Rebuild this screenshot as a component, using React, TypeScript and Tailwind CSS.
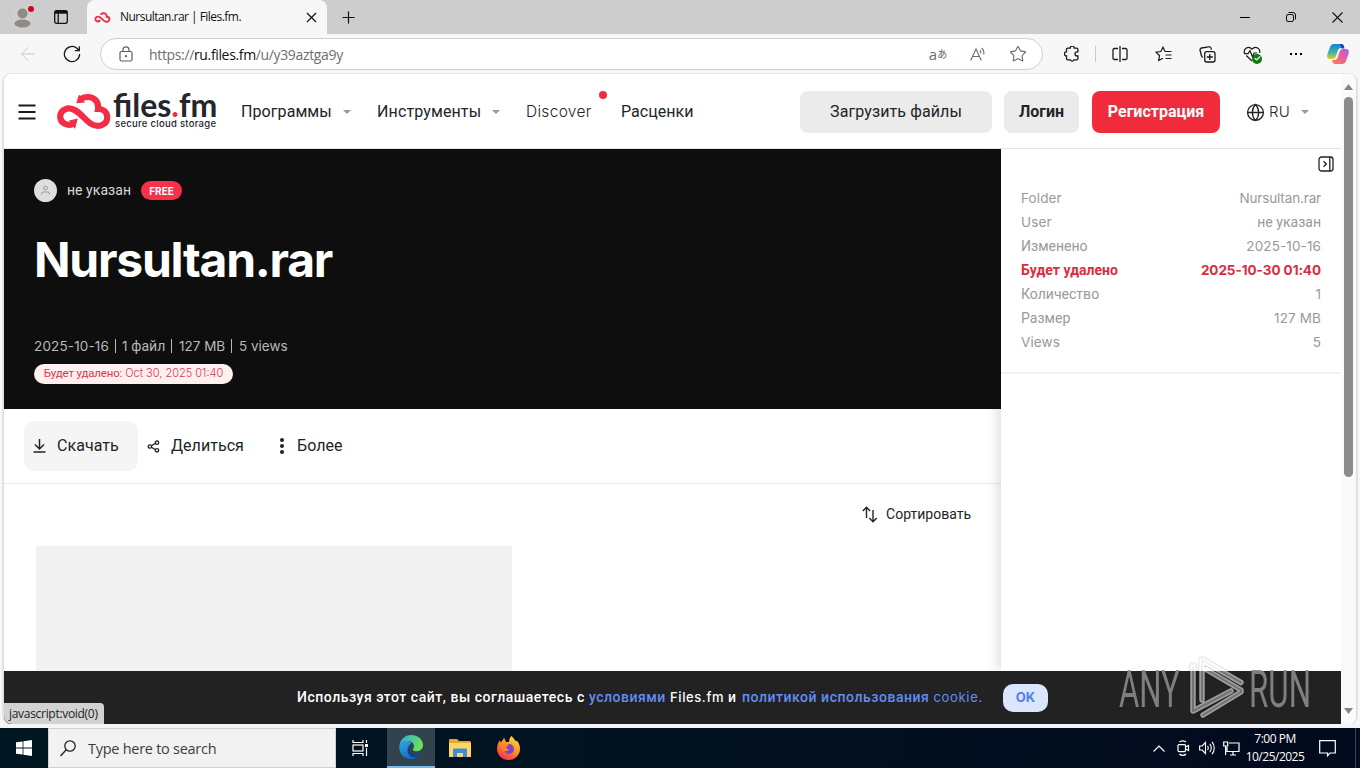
import type { ReactNode } from "react";
import { ArrowLeft, Check, Globe, Plus, Star } from "lucide-react";

const details = [
  { label: "Folder", value: "Nursultan.rar", lf: "latin", vf: "name" },
  { label: "User", value: "не указан", lf: "latin", vf: "cyr" },
  { label: "Изменено", value: "2025-10-16", lf: "cyr", vf: "latin" },
  { label: "Будет удалено", value: "2025-10-30 01:40", lf: "cyr", vf: "bold", alert: true },
  { label: "Количество", value: "1", lf: "cyr", vf: "latin" },
  { label: "Размер", value: "127 MB", lf: "cyr", vf: "latin" },
  { label: "Views", value: "5", lf: "latin", vf: "latin" },
];

const fonts: Record<string, string> = {
  latin: "font-['Inter',sans-serif] text-[13.5px] tracking-[0.12px]",
  name: "font-['Inter',sans-serif] text-[13.5px] tracking-[-0.15px]",
  bold: "font-['Inter',sans-serif] text-[13.5px] tracking-[-0.05px]",
  cyr: "font-['Roboto',sans-serif] text-[14px] tracking-[0.02px]",
};

function Cell({ className, children }: { className: string; children?: ReactNode }) {
  return <div className={`flex shrink-0 items-center justify-center ${className}`}>{children}</div>;
}

function Caret() {
  return (
    <svg width="8" height="4" viewBox="0 0 8 4">
      <path d="M0 0h8L4 4z" fill="#999" />
    </svg>
  );
}

// looped arrow cloud, shared by the favicon and the site logo
function CloudMark({ className }: { className: string }) {
  return (
    <svg className={className} viewBox="0 0 54 37" fill="none">
      <path
        d="M16 31C9 33.500 3.200 29.500 3.200 23.500C3.200 17 11 12.800 18.500 17.500C24.500 21.300 28 26.500 33.500 30.500C41 35.500 50.200 32 50.200 24.500C50.200 19.500 46.500 16 41 16C42 8 36.500 4 31 4C27.500 4 24.500 5 22.500 7"
        stroke="#f12d47"
        strokeWidth="6.2"
      />
      <path d="M22 1.500L19.300 10.200L28 9.500zM12 27.500L20.800 25.500L18 36z" fill="#f12d47" />
    </svg>
  );
}

function TabStrip() {
  return (
    <div className="flex h-[34px] shrink-0 bg-[#cdcdcd]">
      <Cell className="relative w-[43px]">
        <svg width="22" height="22" viewBox="0 0 22 22">
          <circle cx="11" cy="11" r="10.500" fill="#d0cfcd" />
          <circle cx="11.500" cy="7.500" r="5" fill="#8d8a87" />
          <ellipse cx="11.500" cy="17.500" rx="8" ry="4" fill="#8d8a87" />
        </svg>
        <div className="absolute left-[28px] top-[6px] h-[6px] w-[6px] rounded-full bg-[#d3051d]" />
      </Cell>
      <Cell className="w-[35px]">
        <svg width="14" height="14" viewBox="0 0 14 14" fill="none" stroke="#111" strokeWidth="1.300">
          <rect x="0.700" y="0.700" width="12.600" height="12.600" rx="2" />
          <path d="M1 2.200h12" strokeWidth="3" />
          <path d="M4.200 3v10" />
        </svg>
      </Cell>
      <div className="ml-[9px] flex w-[240px] items-center rounded-t-lg bg-[#f7f7f7] pl-[7px] pr-[10px]">
        <CloudMark className="h-[11px] w-[17px]" />
        <span className="ml-[9px] flex-1 whitespace-nowrap font-['Open_Sans',sans-serif] text-[12px] tracking-[-0.53px] text-[#111]">
          Nursultan.rar | Files.fm.
        </span>
        <svg width="11" height="11" viewBox="0 0 11 11" stroke="#111" strokeWidth="1.200">
          <path d="M1 1l9 9M10 1l-9 9" />
        </svg>
      </div>
      <Cell className="w-[42px]">
        <Plus size={19} strokeWidth={1.500} color="#111" />
      </Cell>
      <div className="flex-1" />
      <Cell className="w-[46px]">
        <div className="h-px w-[10px] bg-black" />
      </Cell>
      <Cell className="w-[46px]">
        <svg width="10" height="10" viewBox="0 0 10 10" fill="none" stroke="#111">
          <rect x="0.500" y="2.500" width="7" height="7" rx="1.500" />
          <path d="M2.500 0.500h4.500a2.500 2.500 0 0 1 2.500 2.500v4.500" />
        </svg>
      </Cell>
      <Cell className="w-[46px]">
        <svg width="11" height="11" viewBox="0 0 11 11" stroke="#111" strokeWidth="1.100">
          <path d="M0.500 0.500l10 10M10.500 0.500l-10 10" />
        </svg>
      </Cell>
    </div>
  );
}

function Toolbar() {
  return (
    <div className="flex h-[40px] shrink-0 items-center bg-[#f7f7f7]">
      <Cell className="w-[56px]">
        <ArrowLeft size={22} strokeWidth={1} color="#c4c4c4" />
      </Cell>
      <Cell className="w-[32px]">
        <svg width="18" height="18" viewBox="0 0 18 18" fill="none" stroke="#1a1a1a" strokeWidth="1.300">
          <path d="M16.600 9a7.600 7.600 0 1 1-2.400-5.500L16 5.500M16.300 1.200v4.500h-4.500" />
        </svg>
      </Cell>
      <div className="ml-[12px] flex h-[32px] w-[943px] items-center rounded-full border border-[#cfcfcf] bg-white pl-[18px] pr-[4px]">
        <svg width="14" height="16" viewBox="0 0 14 16" fill="none" stroke="#5f5f5f" strokeWidth="1.200">
          <rect x="1" y="5.500" width="12" height="9.500" rx="1.500" />
          <path d="M4 5.500V3.800a3 3 0 0 1 6 0v1.700" />
          <circle cx="7" cy="10.200" r="0.500" fill="#5f5f5f" />
        </svg>
        <span className="ml-[16px] flex-1 whitespace-nowrap font-['Open_Sans',sans-serif] text-[14px] tracking-[-0.35px] text-[#6e6e6e]">
          https://<span className="text-[#111]">ru.files.fm</span>/u/y39aztga9y
        </span>
        <Cell className="w-[40px] font-['Open_Sans','Noto_Sans_CJK_JP',sans-serif] text-[#6b6b6b]">
          <span className="text-[15px] leading-none">a</span>
          <span className="text-[10px] leading-none">あ</span>
        </Cell>
        <Cell className="w-[40px]">
          <svg width="16" height="15" viewBox="0 0 16 15" fill="none" stroke="#6b6b6b" strokeWidth="1.100">
            <path d="M0.700 13.500L6 2l5.300 11.500M2.500 9.500h7M9.800 3.200a4 4 0 0 1 1 3.500M11.700 1a7 7 0 0 1 2 6.500" />
          </svg>
        </Cell>
        <Cell className="w-[40px]">
          <Star size={18} strokeWidth={1.500} color="#6b6b6b" />
        </Cell>
      </div>
      <Cell className="ml-[7px] w-[44px]">
        <svg width="16" height="16" viewBox="0 0 16 16" fill="none" stroke="#1a1a1a" strokeWidth="1.300">
          <path d="M2.500 3.500a1.300 1.300 0 0 1 1.300-1.300h2.400a2 2 0 0 1 4 0h2.400a1.300 1.300 0 0 1 1.300 1.300v2.300h-.8a2 2 0 0 0 0 4.200h.8v2.500a1.300 1.300 0 0 1-1.300 1.300H10a2 2 0 0 1-3.700 0H3.800a1.300 1.300 0 0 1-1.300-1.300V10a2 2 0 0 1 0-4.200z" />
        </svg>
      </Cell>
      <div className="ml-px h-[16px] w-px bg-[#cbcbcb]" />
      <Cell className="w-[46px] pl-px">
        <svg width="16" height="16" viewBox="0 0 16 16" fill="none" stroke="#1a1a1a" strokeWidth="1.300">
          <path d="M6 2.500H2.300A1.300 1.300 0 0 0 1 3.800v8.400a1.300 1.300 0 0 0 1.300 1.300H6M10 2.500h3.700A1.300 1.300 0 0 1 15 3.800v8.400a1.300 1.300 0 0 1-1.300 1.300H10M8 0v16" />
        </svg>
      </Cell>
      <Cell className="w-[44px] pr-px">
        <svg width="17" height="16" viewBox="0 0 17 16" fill="none" stroke="#1a1a1a" strokeWidth="1.200">
          <path d="M15.500 5.500H10L8 1.200L5.900 5.500L1 6.200l3.600 3.500L3.700 14.500L8 12.200M10.500 9h6M10.500 12.500h6M10.500 5.500h6" />
        </svg>
      </Cell>
      <Cell className="w-[44px] pr-px">
        <svg width="17" height="17" viewBox="0 0 17 17" fill="none" stroke="#1a1a1a" strokeWidth="1.300">
          <rect x="5.700" y="5.700" width="10.300" height="10.300" rx="2" />
          <path d="M10.800 8v6M7.800 11h6M3.800 11.500A2 2 0 0 1 2.600 10L1.100 4.500A2 2 0 0 1 2.500 2L9.500 0.800A2 2 0 0 1 12 2.200l.4 1.500" />
        </svg>
      </Cell>
      <Cell className="relative w-[44px] pr-px">
        <svg width="18" height="17" viewBox="0 0 18 17" fill="none" stroke="#1a1a1a" strokeWidth="1.200">
          <path d="M1.500 7.500C0 3 5.500-1 9 3.200C12.500-1 18 3 16.500 7M3.300 9.500L9 15M1 7.700h4l2-3 2.500 6L11.200 7h3" />
        </svg>
        <div className="absolute left-[22px] top-[8px] flex h-[10px] w-[10px] items-center justify-center rounded-full bg-[#107c10]">
          <Check size={7} strokeWidth={4} color="#fff" />
        </div>
      </Cell>
      <Cell className="w-[44px] gap-[3px]">
        <i className="h-[2px] w-[2px] bg-black" />
        <i className="h-[2px] w-[2px] bg-black" />
        <i className="h-[2px] w-[2px] bg-black" />
      </Cell>
      <Cell className="w-[40px]">
        <svg width="22" height="20" viewBox="0 0 22 20">
          <defs>
            <linearGradient id="cpA" x1="0" y1="0" x2="0" y2="1">
              <stop offset="0" stopColor="#1a7fe0" />
              <stop offset="0.550" stopColor="#35b6a0" />
              <stop offset="1" stopColor="#f1c52c" />
            </linearGradient>
            <linearGradient id="cpB" x1="1" y1="0" x2="0" y2="1">
              <stop offset="0" stopColor="#a45ee8" />
              <stop offset="0.500" stopColor="#ee5e99" />
              <stop offset="1" stopColor="#f58a4b" />
            </linearGradient>
          </defs>
          <path d="M7 0h7c2 0 2.500 2 3 4h-3c-2 0-3 1.500-3.500 3.500L9 12c-.7 2-1.500 3-3.500 3H3C0 15-.3 12.500.5 10L3 3C3.800 1 5 0 7 0z" fill="url(#cpA)" />
          <path d="M15 20H8c-2 0-2.500-2-3-4h2.500c2 0 3-1.500 3.500-3.500L12.500 8c.7-2 1.500-3 3.500-3h3c3 0 3.300 2.500 2.500 5L19 17c-.8 2-2 3-4 3z" fill="url(#cpB)" />
          <path d="M13 0h1.500c2 0 2.500 2 3 4.500h-3z" fill="#1548b8" />
        </svg>
      </Cell>
    </div>
  );
}

function SiteHeader() {
  return (
    <header className="flex h-[75px] shrink-0 items-center border-b border-[#e4e4e4] bg-white pt-[2px] font-['Roboto',sans-serif] text-[16px] text-[#212529]">
      <Cell className="w-[46px]">
        <svg width="18" height="16" viewBox="0 0 18 16" stroke="#1a1a1a" strokeWidth="2">
          <path d="M0.500 1.500h17M0.500 8h17M0.500 14.500h17" />
        </svg>
      </Cell>
      <div className="ml-[7px] flex w-[184px] items-center">
        <CloudMark className="mb-[2px] h-[37px] w-[54px]" />
        <div className="ml-[2px] mb-[6px] flex h-[40px] flex-col whitespace-nowrap font-['Lato',sans-serif] text-[#24262b]">
          <div className="h-[28px] text-[32px] font-bold leading-[31px] tracking-[0px]">
            files<span className="text-[#ee2d45]">.</span>fm
          </div>
          <div className="pl-[2px] font-['Inter',sans-serif] text-[9.5px] font-medium leading-[13px] tracking-[0.28px]">
            secure cloud storage
          </div>
        </div>
      </div>
      <div className="flex w-[136px] items-center whitespace-nowrap">
        <span className="w-[102px] tracking-[0.08px]">Программы</span>
        <Caret />
      </div>
      <div className="flex w-[149px] items-center whitespace-nowrap">
        <span className="w-[115px] tracking-[0.12px]">Инструменты</span>
        <Caret />
      </div>
      <div className="relative w-[95px] whitespace-nowrap">
        <span className="font-['Inter',sans-serif] text-[15.5px] font-light tracking-[0.3px]">Discover</span>
        <i className="absolute left-[73px] top-[-9px] h-[8px] w-[8px] rounded-full bg-[#ee2d45]" />
      </div>
      <div className="w-[179px] whitespace-nowrap tracking-[0.05px]">Расценки</div>
      <Cell className="h-[42px] w-[192px] rounded-lg bg-[#ebebeb] tracking-[0.1px]">Загрузить файлы</Cell>
      <Cell className="ml-[12px] h-[42px] w-[75px] rounded-lg bg-[#ebebeb] font-bold">Логин</Cell>
      <Cell className="ml-[13px] h-[42px] w-[128px] rounded-lg bg-[#f02c3c] font-bold text-white">Регистрация</Cell>
      <div className="ml-[26px] flex items-center">
        <Globe size={19} strokeWidth={1.700} color="#212529" />
        <span className="ml-[4px] w-[32px] font-['Inter',sans-serif] text-[15px] font-light tracking-[0.3px]">RU</span>
        <Caret />
      </div>
    </header>
  );
}

function Hero() {
  return (
    <section className="flex h-[260px] shrink-0 flex-col bg-[#0e0e0e] pl-[30px] pt-[30px]">
      <div className="flex h-[23px] items-center">
        <Cell className="h-[23px] w-[23px] rounded-full bg-[#dedede]">
          <svg width="11" height="11" viewBox="0 0 11 11" fill="none" stroke="#999">
            <circle cx="5.500" cy="3" r="1.900" />
            <path d="M1.500 9.500V9a2 2 0 0 1 2-2h4a2 2 0 0 1 2 2v.5" />
          </svg>
        </Cell>
        <span className="ml-[10px] w-[74px] whitespace-nowrap font-['Roboto',sans-serif] text-[14px] tracking-[0.05px] text-[#d6d6d6]">
          не указан
        </span>
        <Cell className="h-[19px] w-[41px] rounded-full bg-[#f8304a] pt-px font-['Inter',sans-serif] text-[10px] font-bold text-white">
          FREE
        </Cell>
      </div>
      <h1 className="mt-[28px] h-[60px] whitespace-nowrap font-['Inter',sans-serif] text-[48px] font-bold leading-[60px] tracking-[-1.25px] text-white">
        Nursultan.rar
      </h1>
      <div className="mt-[47px] flex h-[18px] items-center whitespace-nowrap font-['Inter',sans-serif] text-[13.5px] text-[#b9b9b9]">
        <span className="w-[81px] tracking-[0.15px]">2025-10-16</span>
        <i className="h-[14px] w-px bg-[#b9b9b9]" />
        <span className="w-[55px] pl-[6px]">
          1 <span className="font-['Roboto',sans-serif] text-[14px]">файл</span>
        </span>
        <i className="h-[14px] w-px bg-[#b9b9b9]" />
        <span className="w-[59px] pl-[7px]">127 MB</span>
        <i className="h-[14px] w-px bg-[#b9b9b9]" />
        <span className="pl-[7px]">5 views</span>
      </div>
      <div className="mt-[9px] flex h-[20px] w-[199px] items-center justify-center gap-[3px] whitespace-nowrap rounded-full bg-[#fff0f0] pb-px text-[#d8384c]">
        <span className="font-['Roboto',sans-serif] text-[11.500px] tracking-[-0.17px]">Будет удалено:</span>
        <span className="font-['Inter',sans-serif] text-[11px] font-light">Oct 30, 2025 01:40</span>
      </div>
    </section>
  );
}

function Actions() {
  return (
    <div className="flex h-[75px] shrink-0 items-center border-b border-[#ebebeb] pl-[20px] font-['Roboto',sans-serif] text-[16px] tracking-[0.05px] text-[#212529]">
      <div className="flex h-[50px] w-[114px] items-center rounded-[10px] bg-[#f5f5f5] pl-[9px]">
        <svg width="13" height="14" viewBox="0 0 13 14" fill="none" stroke="#212529" strokeWidth="1.500">
          <path d="M6.500 0v9.500M2 5.500l4.500 4.500L11 5.500M0.500 13h12" />
        </svg>
        <span className="ml-[11px]">Скачать</span>
      </div>
      <div className="ml-[9px] flex w-[131px] items-center">
        <svg width="13" height="13" viewBox="0 0 13 13" fill="none" stroke="#212529" strokeWidth="1.300">
          <circle cx="2.900" cy="6.500" r="1.700" />
          <circle cx="10" cy="2.700" r="1.700" />
          <circle cx="10" cy="10.300" r="1.700" />
          <path d="M4.300 5.700l4.200-2.300M4.300 7.300l4.200 2.300" />
        </svg>
        <span className="ml-[11px]">Делиться</span>
      </div>
      <div className="ml-[2px] flex items-center">
        <span className="flex flex-col gap-[2px]">
          <i className="h-[4px] w-[4px] rounded-full bg-[#212529]" />
          <i className="h-[4px] w-[4px] rounded-full bg-[#212529]" />
          <i className="h-[4px] w-[4px] rounded-full bg-[#212529]" />
        </span>
        <span className="ml-[13px]">Более</span>
      </div>
    </div>
  );
}

function Sidebar() {
  return (
    <aside className="relative z-10 flex w-[340px] shrink-0 flex-col bg-white shadow-[-3px_0_12px_rgba(0,0,0,0.14)]">
      <div className="flex h-[37px] justify-end pr-[7px] pt-[7px]">
        <svg width="16" height="16" viewBox="0 0 16 16" fill="none" stroke="#222" strokeWidth="1.300">
          <rect x="1" y="1" width="14" height="14" rx="2.500" />
          <path d="M11.800 1v14M5.500 5.200L8.300 8l-2.800 2.800" />
        </svg>
      </div>
      <div className="flex h-[188px] flex-col border-b-2 border-[#f1f1f1] pl-[20px] pr-[20px] text-[#999]">
        {details.map((d) => (
          <div
            key={d.label}
            className={`flex h-[24px] items-center justify-between whitespace-nowrap ${d.alert ? "font-bold text-[#dc2c40]" : ""}`}
          >
            <span className={fonts[d.lf]}>{d.label}</span>
            <span className={fonts[d.vf]}>{d.value}</span>
          </div>
        ))}
      </div>
    </aside>
  );
}

function CookieBar() {
  return (
    <div className="flex h-[53px] shrink-0 items-center whitespace-nowrap bg-[#222] pl-[293px] font-['Roboto',sans-serif] text-[14px] font-medium tracking-[0.53px] text-white">
      <span className="w-[292px]">Используя этот сайт, вы соглашаетесь с</span>
      <span className="w-[81px] tracking-[0.5px] text-[#638df5]">условиями</span>
      <span className="w-[72px]">
        <span className="font-['Inter',sans-serif] text-[13px] tracking-[0.6px]">Files.fm</span> и
      </span>
      <span className="w-[261px] tracking-[0.54px] text-[#638df5]">
        политикой использования{" "}
        <span className="font-['Inter',sans-serif] text-[13px] font-normal tracking-[0.7px]">cookie.</span>
      </span>
      <Cell className="h-[28px] w-[45px] rounded-[10px] bg-[#dbe5fc] font-['Inter',sans-serif] text-[13px] font-bold tracking-[0px] text-[#507fec]">
        OK
      </Cell>
    </div>
  );
}

function Watermark() {
  return (
    <div className="absolute left-[1119px] top-[655px] z-20 h-[66px] w-[194px] font-['Roboto',sans-serif] text-[51px] leading-[60px] text-[#8a8a8a]/90">
      <span className="absolute left-0 top-[5px] origin-left scale-x-[0.61]">ANY</span>
      <svg
        className="absolute left-[71px] top-0 drop-shadow-[0_0_1px_rgba(0,0,0,0.3)]"
        width="56"
        height="66"
        viewBox="0 0 56 66"
        fill="none"
        strokeLinecap="round"
        strokeLinejoin="round"
      >
        <defs>
          {/* white above the cookie bar, grey once the mark runs over it */}
          <linearGradient id="wmEdge" gradientUnits="userSpaceOnUse" x1="0" y1="0" x2="0" y2="66">
            <stop offset="0.242" stopColor="#ffffff" />
            <stop offset="0.243" stopColor="#9c9c9c" />
          </linearGradient>
          <linearGradient id="wmCore" gradientUnits="userSpaceOnUse" x1="0" y1="0" x2="0" y2="66">
            <stop offset="0.242" stopColor="#f1f1f1" />
            <stop offset="0.243" stopColor="#727272" />
          </linearGradient>
        </defs>
        <path d="M3 11V56L41 36M12 45V5L51 27.500M13 60L51 37V35L17 15" stroke="url(#wmEdge)" strokeWidth="5.5" />
        <path d="M3 11V56L41 36M12 45V5L51 27.500M13 60L51 37V35L17 15" stroke="url(#wmCore)" strokeWidth="2" />
      </svg>
      <span className="absolute left-[130px] top-[5px] origin-left scale-x-[0.615]">RUN</span>
    </div>
  );
}

function Taskbar() {
  return (
    <div className="flex h-[40px] shrink-0 items-stretch bg-linear-to-r from-[#001722] to-[#020a1d] font-['Open_Sans',sans-serif]">
      <Cell className="w-[48px]">
        <svg width="16" height="16" viewBox="0 0 16 16" fill="#fff">
          <path d="M0 2.300L6.600 1.400v6.200H0zM7.400 1.300L16 0v7.600H7.400zM0 8.400h6.600v6.200L0 13.700zM7.400 8.400H16V16l-8.600-1.300z" />
        </svg>
      </Cell>
      <div className="flex w-[288px] items-center border border-[#d0d0d0] bg-[#f2f2f2] pl-[11px]">
        <svg width="16" height="17" viewBox="0 0 16 17" fill="none" stroke="#222" strokeWidth="1.300">
          <circle cx="10" cy="6" r="5.200" />
          <path d="M6.300 9.700L0.500 16" />
        </svg>
        <span className="ml-[12px] whitespace-nowrap pt-px text-[14.5px] tracking-[-0.27px] text-[#3d3d3d]">
          Type here to search
        </span>
      </div>
      <Cell className="w-[51px] pr-[2px]">
        <svg width="17" height="16" viewBox="0 0 17 16" fill="none" stroke="#fff" strokeWidth="1.200">
          <path d="M1 0v2.500h10V0M1 16v-2.500h10V16M14.500 0v3M14.500 8v8" />
          <rect x="1" y="5" width="10" height="6" />
          <path d="M13 5.500h3" strokeWidth="3" />
        </svg>
      </Cell>
      <Cell className="w-[48px] border-b-2 border-[#76b9ed] bg-[#31444d]">
        <svg width="24" height="24" viewBox="0 0 24 24">
          <defs>
            <linearGradient id="edA" x1="0" y1="0" x2="1" y2="0.300">
              <stop offset="0" stopColor="#2ba8e0" />
              <stop offset="1" stopColor="#6be05a" />
            </linearGradient>
            <linearGradient id="edB" x1="0" y1="0" x2="0.600" y2="1">
              <stop offset="0" stopColor="#2aa9e8" />
              <stop offset="1" stopColor="#1668bd" />
            </linearGradient>
          </defs>
          <path d="M0.500 11C1 4.500 6 0 12 0c7 0 12 4.800 12 10 0 4-3 6.200-6 6.200-3.500 0-4.500-1.200-4.200-2 .5-1 1.200-1.500 1.200-3.200C15 8 12 6 8.500 6 5 6 1.500 8 .5 11z" fill="url(#edA)" />
          <path d="M8.500 6C4 6 .3 8.500.2 12.500C.2 19 5.500 24 12 24c4.500 0 8-2.500 10-5.500-6 3-13 .5-13-5 0-2.200 1.500-4.300 3.500-5C11.500 6.800 10.500 6 8.500 6z" fill="url(#edB)" />
          <path d="M9 12.500C7 18 11 23 17 22.500c2.200-1 4-2.500 5-4-5.500 2.500-12 0-13-6z" fill="#123f8e" />
        </svg>
      </Cell>
      <Cell className="w-[49px]">
        <svg width="22" height="18" viewBox="0 0 22 18">
          <path d="M0 1.500C0 .7.500 0 1.300 0H8l2 2h10.500c.8 0 1.500.7 1.500 1.500V18H0z" fill="#e9a828" />
          <path d="M0 4h22v14H0z" fill="#fcd667" />
          <path d="M4 18v-7.500c0-.6.500-1 1-1h12c.6 0 1 .4 1 1V18h-4v-4H8v4z" fill="#3f8dd0" />
        </svg>
      </Cell>
      <Cell className="w-[49px]">
        <svg width="23" height="24" viewBox="0 0 23 24">
          <defs>
            <linearGradient id="ffA" x1="0.800" y1="0" x2="0.200" y2="1">
              <stop offset="0" stopColor="#ffe13a" />
              <stop offset="0.500" stopColor="#ff8a24" />
              <stop offset="1" stopColor="#f4255c" />
            </linearGradient>
          </defs>
          <path d="M14.500 0c2 2 3.500 4 4.500 5.500l.8-1C22 7 23 10 23 13 23 19 18 24 11.500 24S0 19 0 13C0 9 1.500 6 3 4l.5 2.500C5 5 6 4 7 1.500L9 6h3C12 3.500 13 1 14.500 0z" fill="url(#ffA)" />
          <circle cx="12" cy="13" r="5" fill="#7a43c9" />
          <path d="M4.500 8.500c3-2 5.500-.5 7.500 0L9.500 11c-1 1.200.5 2.500 2.500 2-.5 2-3 2.500-4.500 2C5 14 4 11 4.500 8.500z" fill="#ff8a24" />
        </svg>
      </Cell>
      <div className="flex-1" />
      <Cell className="w-[24px]">
        <svg width="12" height="7" viewBox="0 0 12 7" fill="none" stroke="#fff" strokeWidth="1.200">
          <path d="M0.500 6.500L6 1l5.500 5.500" />
        </svg>
      </Cell>
      <Cell className="w-[24px]">
        <svg width="13" height="16" viewBox="0 0 13 16" fill="none" stroke="#fff" strokeWidth="1.200">
          <rect x="1" y="4.600" width="7.500" height="7" rx="1" />
          <path d="M8.500 7l3-1.500v5l-3-1.500M2.500 2.200C4 .4 7.500.4 9 2.200M2.500 14c1.500 1.800 5 1.800 6.500 0" />
        </svg>
      </Cell>
      <Cell className="w-[24px]">
        <svg width="17" height="14" viewBox="0 0 17 14" fill="none" stroke="#fff" strokeWidth="1.100">
          <path d="M0.600 5h2.600L6.500 1.500v11L3.200 9H.6zM8.500 5c1 1 1 3 0 4M10.800 3c2 2 2 6 0 8M13 1c3 3 3 9 0 12" />
        </svg>
      </Cell>
      <Cell className="w-[24px]">
        <svg width="17" height="15" viewBox="0 0 17 15" fill="none" stroke="#fff" strokeWidth="1.200">
          <path d="M6 2h10v8.500H4V6M10 10.500V14M7 14h6M0.700 1h4v4h-4zM2.600 5v9" />
        </svg>
      </Cell>
      <div className="flex w-[64px] flex-col items-center justify-center whitespace-nowrap text-[12px] leading-[18px] tracking-[-0.5px] text-white">
        <span>7:00 PM</span>
        <span>10/25/2025</span>
      </div>
      <Cell className="w-[40px]">
        <svg width="17" height="17" viewBox="0 0 17 17" fill="none" stroke="#fff" strokeWidth="1.200">
          <path d="M0.700 0.700h15.600v12.300H11L8.500 15.800V13H.7z" />
        </svg>
      </Cell>
      <div className="ml-[8px] mr-[4px] w-px bg-[#3b4150]" />
    </div>
  );
}

export default function App() {
  return (
    <div className="relative flex h-[768px] w-[1360px] flex-col overflow-hidden bg-[#f7f7f7]">
      <TabStrip />
      <Toolbar />
      <div className="ml-[3px] mr-[3px] flex h-[650px] shrink-0 overflow-hidden rounded-lg border-x border-[#dedede] bg-white shadow-[0_0_0_1px_#e6e6e6]">
        <div className="flex w-[1337px] flex-col">
          <SiteHeader />
          <div className="flex h-[522px] overflow-hidden">
            <main className="flex w-[997px] flex-col">
              <Hero />
              <Actions />
              <div className="flex h-[62px] shrink-0 items-center justify-end pb-[2px] pr-[30px]">
                <svg width="15" height="17" viewBox="0 0 15 17" fill="none" stroke="#212529" strokeWidth="1.400">
                  <path d="M4.500 12V1.500M0.800 5l3.700-3.700L8.200 5M11 4v11.500M7.300 12l3.700 3.700 3.700-3.700" />
                </svg>
                <span className="ml-[9px] whitespace-nowrap font-['Roboto',sans-serif] text-[14px] text-[#212529]">
                  Сортировать
                </span>
              </div>
              <div className="ml-[32px] w-[476px] flex-1 bg-[#f1f1f1]" />
            </main>
            <Sidebar />
          </div>
          <CookieBar />
        </div>
        <div className="flex flex-1 flex-col items-center bg-[#fafafa] py-[10px]">
          <svg width="9" height="6" viewBox="0 0 9 6">
            <path d="M4.500 0L9 6H0z" fill="#858585" />
          </svg>
          <div className="mt-[7px] h-[380px] w-[9px] rounded-full bg-[#8b8b8b]" />
          <div className="flex-1" />
          <svg width="9" height="6" viewBox="0 0 9 6">
            <path d="M4.500 6L0 0h9z" fill="#858585" />
          </svg>
        </div>
      </div>
      <div className="h-[4px] shrink-0 bg-[#f3f5f7]" />
      <Taskbar />
      <div className="absolute left-[4px] top-[703px] z-20 flex h-[21px] w-[100px] items-center whitespace-nowrap rounded-bl-lg rounded-tr bg-[#d2d2d2] pl-[5px] font-['Open_Sans',sans-serif] text-[12px] tracking-[-0.3px] text-[#222]">
        javascript:void(0)
      </div>
      <Watermark />
    </div>
  );
}
